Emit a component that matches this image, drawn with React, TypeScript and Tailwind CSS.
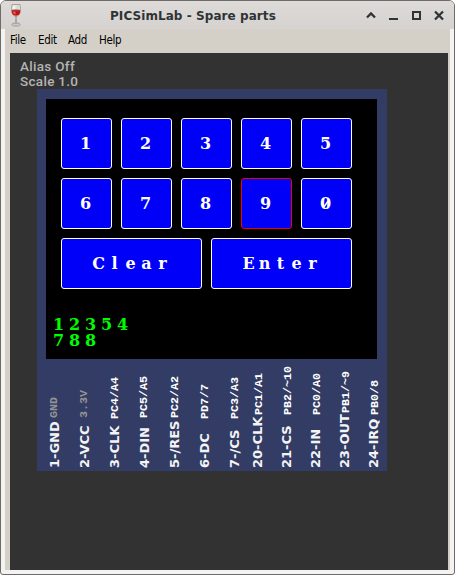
type Pin = { label: string; port: string; base: string; shift: string; muted?: boolean };

const pins: Pin[] = [
  { label: "1-GND", port: "GND", base: "h-[50px]", shift: "-translate-x-px", muted: true },
  { label: "2-VCC", port: "3.3V", base: "h-[50px]", shift: "-translate-x-px", muted: true },
  { label: "3-CLK", port: "PC4/A4", base: "h-[49px]", shift: "translate-x-0" },
  { label: "4-DIN", port: "PC5/A5", base: "h-[50px]", shift: "-translate-x-px" },
  { label: "5-/RES", port: "PC2/A2", base: "h-[50px]", shift: "translate-x-0" },
  { label: "6-DC", port: "PD7/7", base: "h-[49px]", shift: "translate-x-0" },
  { label: "7-/CS", port: "PC3/A3", base: "h-[49px]", shift: "translate-x-0" },
  { label: "20-CLK", port: "PC1/A1", base: "h-[53px]", shift: "translate-x-px" },
  { label: "21-CS", port: "PB2/~10", base: "h-[53px]", shift: "translate-x-px" },
  { label: "22-IN", port: "PC0/A0", base: "h-[53px]", shift: "translate-x-px" },
  { label: "23-OUT", port: "PB1/~9", base: "h-[55px]", shift: "translate-x-px" },
  { label: "24-IRQ", port: "PB0/8", base: "h-[53px]", shift: "translate-x-px" },
];

const serif = "font-['DejaVu_Serif',serif] font-bold";

// Every glyph of the display sits in a 16px character cell; zero is slashed.
function Cells({ text }: { text: string }) {
  return (
    <span className="-ml-[2px] whitespace-nowrap">
      {text.split("").map((c, i) => (
        <span key={i} className="relative inline-block w-[16px] text-center">
          {c}
          {c === "0" && (
            <svg className="absolute top-[2px] left-[3px]" width="10" height="12" viewBox="0 0 10 12">
              <path d="M2.500 9.500 7.500 2.500" stroke="white" strokeWidth="1.500" />
            </svg>
          )}
        </span>
      ))}
    </span>
  );
}

function Key({ text, active = false, wide = false }: { text: string; active?: boolean; wide?: boolean }) {
  return (
    <button
      className={`${wide ? "w-[141px]" : "w-[51px]"} ${active ? "border-[#f00000]" : "border-white"} ${serif} flex h-[51px] shrink-0 items-center justify-center rounded-[3px] border bg-[#0000f8] text-[16px] leading-[16px] text-white`}
    >
      <Cells text={text} />
    </button>
  );
}

function PinColumn({ pin }: { pin: Pin }) {
  return (
    <div className="flex w-[16px] shrink-0 flex-col items-center justify-end">
      <span
        className={`${pin.shift} ${pin.muted ? "text-[#949494]" : "text-white"} rotate-180 font-['Liberation_Mono',monospace] text-[11.7px] leading-[14px] font-bold whitespace-nowrap [writing-mode:vertical-rl]`}
      >
        {pin.port}
      </span>
      <span
        className={`${pin.base} rotate-180 overflow-visible font-['DejaVu_Sans',sans-serif] text-[13px] leading-[16px] font-bold whitespace-nowrap text-[#f4f4f4] [writing-mode:vertical-rl]`}
      >
        {pin.label}
      </span>
    </div>
  );
}

function WineGlass() {
  return (
    <svg width="14" height="24" viewBox="0 0 14 24">
      <ellipse cx="7" cy="21.6" rx="4.4" ry="1.6" fill="#c9c8c5" stroke="#92918e" strokeWidth=".7" />
      <path d="M6.300 13h1.400l.4 8H5.900z" fill="#a5a5a2" />
      <path d="M3 1.500h8c1 5.500.6 11-4 12.200C2.400 12.500 2 7 3 1.500z" fill="#dedcda" stroke="#999591" strokeWidth=".8" />
      <path d="M2.700 7.500h8.600c.1 3-.9 4.800-4.300 5.300-3.400-.5-4.400-2.300-4.300-5.300z" fill="#c81212" />
      <path d="M3.800 8.600h2.700v2.600c-1.500.2-2.300-.6-2.700-2.600z" fill="#ec6058" />
      <ellipse cx="7" cy="7.500" rx="4.200" ry=".9" fill="#a03a36" />
      <path d="M4 2.500h2.500v3.500H3.700z" fill="#f3f2f1" />
    </svg>
  );
}

export default function App() {
  return (
    <div className="h-[575px] w-[455px] overflow-hidden bg-white">
      <div className="flex h-full flex-col overflow-hidden rounded-t-[6px] rounded-b-[3px] border border-[#6e6c6b] bg-[#f5f3f1]">
        <header className="flex h-[28px] shrink-0 items-center bg-linear-to-b from-[#dedad8] to-[#d6d2d0] text-[#2e3436]">
          <div className="ml-[8px] w-[14px]">
            <WineGlass />
          </div>
          <h1 className="ml-[87px] flex-1 pt-px font-['DejaVu_Sans',sans-serif] text-[12px] leading-[16px] font-bold tracking-[0.07px] whitespace-nowrap">
            PICSimLab - Spare parts
          </h1>
          <svg width="84" height="14" viewBox="0 0 84 14" fill="none" stroke="#2e3436" className="mr-[5px]">
            <path d="M2 9.500 6 5.500l4 4" strokeWidth="2.300" />
            <path d="M24 11h9" strokeWidth="2" />
            <path d="M48 4h7v7h-7z" strokeWidth="2" />
            <path d="m70 3.500 8 8m0-8-8 8" strokeWidth="2.300" />
          </svg>
        </header>
        <div className="mx-[4px] mb-[4px] flex min-h-0 flex-1 flex-col bg-[#d4d0c8]">
          <nav className="flex h-[24px] shrink-0 items-center pl-[5px] font-['DejaVu_Sans_Condensed','DejaVu_Sans',sans-serif] text-[11.5px] leading-none tracking-[-0.35px] text-black">
            <span className="w-[28px]">File</span>
            <span className="w-[30px]">Edit</span>
            <span className="w-[31px]">Add</span>
            <span>Help</span>
          </nav>
          <main className="mr-[2px] ml-[5px] min-h-0 flex-1 bg-[#323232]">
            <div className="h-[36px] pt-[6px] pl-[10px] font-['Roboto',sans-serif] text-[13.5px] leading-[15px] font-medium tracking-[0.3px] text-[#b4b4b4]">
              <p>Alias Off</p>
              <p>Scale 1.0</p>
            </div>
            <section className="ml-[27px] h-[382px] w-[350px] bg-[#323c64] pt-[10px] pl-[9px]">
              <div className="h-[260px] w-[331px] bg-black pt-[19px] pl-[15px]">
                <div className="flex flex-col gap-[9px]">
                  <div className="flex gap-[9px]">
                    {["1", "2", "3", "4", "5"].map((k) => (
                      <Key key={k} text={k} />
                    ))}
                  </div>
                  <div className="flex gap-[9px]">
                    {["6", "7", "8", "9", "0"].map((k) => (
                      <Key key={k} text={k} active={k === "9"} />
                    ))}
                  </div>
                  <div className="flex gap-[9px]">
                    <Key text="Clear" wide />
                    <Key text="Enter" wide />
                  </div>
                </div>
                <div className={`${serif} mt-[28px] -ml-[8px] text-[16px] leading-[16px] tracking-[4.86px] text-[#00fc00]`}>
                  <p>12354</p>
                  <p>788</p>
                </div>
              </div>
              <div className="flex h-[109px] pl-px">
                <div className="flex gap-[14px]">
                  {pins.slice(0, 7).map((pin) => (
                    <PinColumn key={pin.label} pin={pin} />
                  ))}
                </div>
                <div className="ml-[7px] flex gap-[13px]">
                  {pins.slice(7).map((pin) => (
                    <PinColumn key={pin.label} pin={pin} />
                  ))}
                </div>
              </div>
            </section>
          </main>
        </div>
      </div>
    </div>
  );
}
